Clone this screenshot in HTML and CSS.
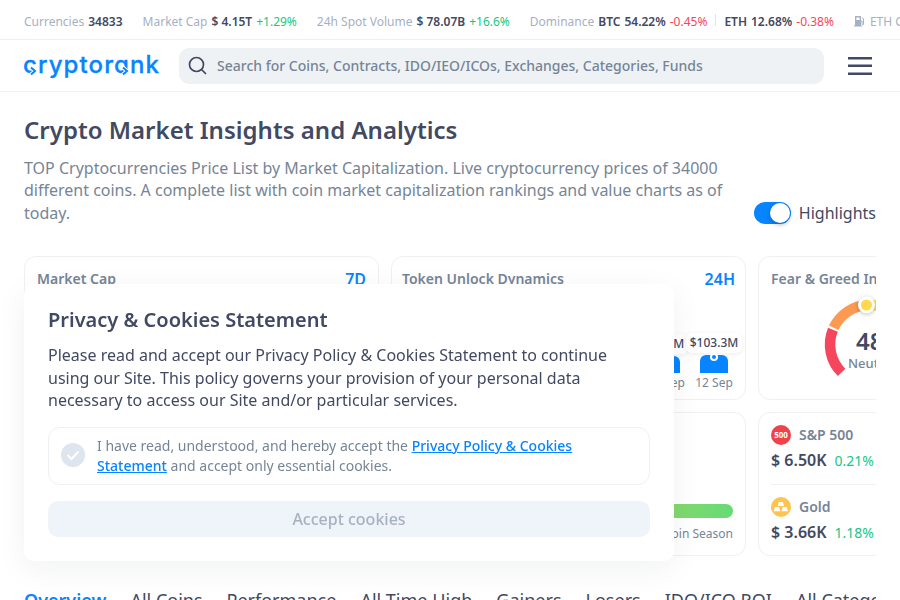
FILE: index.html
```html
<!DOCTYPE html>
<html lang="en">
<head>
<meta charset="utf-8">
<title>Crypto Market Insights and Analytics</title>
<link rel="stylesheet" href="styles.css">
</head>
<body>
<div class="ticker">
  <div class="stat">Currencies <b>34833</b></div>
  <div class="stat">Market Cap <b>$ 4.15T</b> <span class="up">+1.29%</span></div>
  <div class="stat">24h Spot Volume <b>$ 78.07B</b> <span class="up">+16.6%</span></div>
  <div class="stat">Dominance <b>BTC</b> <b>54.22%</b> <span class="down">-0.45%</span><i class="sep"></i><b>ETH</b> <b>12.68%</b> <span class="down">-0.38%</span></div>
  <div class="stat gas"><svg width="11" height="12" viewBox="0 0 11 12"><path d="M1 1.5Q1 1 1.5 1h5Q7 1 7 1.500V10.500H8V11.500H0V10.500H1zM2.400 2.500V5H5.600V2.500z" fill="#a6b0c3" fill-rule="evenodd"/><path d="M7 6h1v3.500q.8 1 1.500 0V4L8 2.500" fill="none" stroke="#a6b0c3"/></svg><span>ETH Gas</span></div>
</div>
<header class="header">
  <svg class="logo" width="136" height="32" viewBox="0 0 136 32">
    <text x="-1" y="23" textLength="136" lengthAdjust="spacing">cryptorank</text>
    <g fill="none">
      <path d="M7 17.500l4 3.500-4 3.500M99 17.500l4 3.500-4 3.500" stroke="#fff" stroke-width="4"/>
      <path d="M7 17.500l4 3.500-4 3.500M99 17.500l4 3.500-4 3.500" stroke="#0784ff" stroke-width="2"/>
    </g>
  </svg>
  <div class="search">
    <svg width="20" height="20" viewBox="0 0 20 20"><circle cx="8.500" cy="8.500" r="7" /><path d="M13.500 13.500L18 18"/></svg>
    <span>Search for Coins, Contracts, IDO/IEO/ICOs, Exchanges, Categories, Funds</span>
  </div>
  <svg class="burger" width="24" height="20" viewBox="0 0 24 20"><path d="M0 1h24v2.400H0zM0 8.600h24V11H0zM0 16.600h24V19H0z" fill="#424962"/></svg>
</header>
<main class="main">
  <h1>Crypto Market Insights and Analytics</h1>
  <div class="intro">
    <p>TOP Cryptocurrencies Price List by Market Capitalization. Live cryptocurrency prices of 34000 different coins. A complete list with coin market capitalization rankings and value charts as of today.</p>
    <label class="toggle"><span class="track"></span>Highlights</label>
  </div>
  <div class="cards">
    <section class="card"><div class="card-head"><h2>Market Cap</h2><em>7D</em></div></section>
    <section class="card unlocks">
      <div class="card-head"><h2>Token Unlock Dynamics</h2><em>24H</em></div>
      <div class="bars">
        <div class="bar-item"><span class="value">$93.5M</span><span class="bar"></span><small>11 Sep</small></div>
        <div class="bar-item"><span class="value">$103.3M</span><span class="bar tall"></span><small>12 Sep</small></div>
      </div>
    </section>
    <section class="card">
      <div class="card-head"><h2>Fear &amp; Greed Index</h2></div>
      <svg class="gauge" width="105" height="84" viewBox="0 0 105 84">
        <g fill="none" stroke-width="10.500">
          <path d="M18.600 74.400A39.500 39.500 0 0 1 9.900 31.700" stroke="#f6465d"/>
          <path d="M10.700 29.800A39.500 39.500 0 0 1 45 7" stroke="#fb9a50"/>
          <path d="M47.500 7A39.500 39.500 0 0 1 74 18" stroke="#ffd84d"/>
        </g>
        <circle class="knob" cx="43.500" cy="7" r="7" fill="#ffd84d" stroke="#fff" stroke-width="3"/>
        <text class="score" x="33" y="52">48</text><text class="mood" x="25" y="70">Neutral</text>
      </svg>
    </section>
    <section class="card"></section>
    <section class="card season"><div class="scale"></div><small>Altcoin Season</small></section>
    <section class="card markets">
      <div class="asset">
        <div class="asset-name"><span class="dot red">500</span>S&amp;P 500</div>
        <div class="price"><b>$ 6.50K</b><span class="up">0.21%</span></div>
      </div>
      <div class="asset">
        <div class="asset-name"><span class="dot gold"><svg width="16" height="12" viewBox="0 0 16 12" fill="#fff"><path d="M5.800 1h4l1.200 4H4.600zM2 6h4l1.300 4.200H.8zM9.700 6h4l1.300 4.200H8.500z"/></svg></span>Gold</div>
        <div class="price"><b>$ 3.66K</b><span class="up">1.18%</span></div>
      </div>
    </section>
  </div>
  <nav class="tabs"><a class="active">Overview</a><a>All Coins</a><a>Performance</a><a>All Time High</a><a>Gainers</a><a>Losers</a><a>IDO/ICO ROI</a><a>All Categories</a></nav>
</main>
<aside class="cookies">
  <h3>Privacy &amp; Cookies Statement</h3>
  <p>Please read and accept our Privacy Policy &amp; Cookies Statement to continue using our Site. This policy governs your provision of your personal data necessary to access our Site and/or particular services.</p>
  <div class="consent">
    <svg width="24" height="24" viewBox="0 0 24 24"><circle cx="12" cy="12" r="12" fill="#dfe5ee"/><path d="M6.500 12l4 4 7-7.500" fill="none" stroke="#fff" stroke-width="2"/></svg>
    <div>I have read, understood, and hereby accept the <a>Privacy Policy &amp; Cookies Statement</a> and accept only essential cookies.</div>
  </div>
  <button>Accept cookies</button>
</aside>
</body>
</html>
```
FILE: styles.css
```css
* { box-sizing: border-box; }
body { margin: 0; height: 600px; overflow: hidden; background: #fff; color: #424962; font-family: "Noto Sans", sans-serif; font-size: 16px; }
h1, h2, h3, p { margin: 0; }
.up { color: #16c784; }
.down { color: #f6465d; }
.ticker { display: flex; align-items: center; gap: 20px; height: 40px; padding: 3px 0 0 24px; border-bottom: 1px solid #eff0f2; font-size: 12px; color: #a6b0c3; white-space: nowrap; overflow: hidden; }
.stat { display: flex; align-items: center; gap: 4px; flex: none; }
.gas { gap: 5px; }
.stat b { color: #424962; font-weight: 600; }
.sep { width: 1px; height: 12px; margin: 0 4px; background: #dfe5ee; transform: translateY(-1px); }
.header { display: flex; align-items: center; height: 52px; padding: 0 28px 0 24px; border-bottom: 1px solid #eff0f2; }
.logo { flex: none; overflow: visible; margin-right: 19px; }
.logo text { font: 500 24px Inter, sans-serif; font-feature-settings: "cv11"; fill: #0784ff; stroke: #0784ff; stroke-width: .3; }
.search { display: flex; align-items: center; gap: 9px; width: 645px; height: 36px; padding: 0 9px; border-radius: 10px; background: #eef2f5; color: #768596; font-size: 14px; font-weight: 500; }
.search svg { fill: none; stroke: #424962; stroke-width: 1.7; }
.burger { flex: none; margin-left: 24px; }
.main { padding: 23px 24px 0; }
h1 { font-size: 24px; line-height: 29px; font-weight: 600; letter-spacing: .01px; }
.intro { display: flex; align-items: flex-end; justify-content: space-between; margin-top: 13px; }
.intro p { width: 706px; color: #768596; line-height: 22.4px; }
.toggle { display: flex; align-items: center; gap: 8px; flex: none; line-height: 22px; }
.track { display: flex; align-items: center; justify-content: flex-end; width: 37px; height: 22px; border-radius: 11px; padding: 1px; background: #0784ff; }
.track::after { content: ""; width: 20px; height: 20px; border-radius: 50%; background: #fff; box-shadow: 0 2px 4px rgba(0, 35, 70, .3); }
.cards { display: grid; grid-template-columns: repeat(3, 355px); grid-template-rows: 144px 144px; gap: 12px; margin-top: 32px; overflow: hidden; }
.card { border: 1px solid #eff0f2; border-radius: 12px; padding: 11px 10px 11px 12px; min-width: 0; }
.card-head { display: flex; justify-content: space-between; align-items: center; height: 22px; }
.card-head h2 { font-size: 14px; line-height: 20px; font-weight: 600; color: #768596; }
.card-head em { color: #0784ff; font-style: normal; font-weight: 600; }
.card:first-child .card-head { padding-right: 2px; }
.unlocks { padding-left: 10px; }
.bars { display: flex; justify-content: flex-end; align-items: flex-end; margin: 41px -10px 0 0; height: 60px; }
.bar-item { display: flex; flex-direction: column; align-items: center; width: 48px; font-size: 12px; line-height: 16px; white-space: nowrap; }
.bar-item:first-child .value { margin-right: 5px; }
.bar-item:last-child { margin-right: 7px; }
.bar { width: 28px; height: 17px; margin-bottom: 2px; border-radius: 6px 6px 0 0; background: #0784ff; }
.bar.tall { height: 18px; }
.value { margin-bottom: 2px; padding: 2px 4px; border-radius: 6px; background: #fff; box-shadow: 0 1px 4px rgba(0, 30, 60, .08); font-weight: 500; }
.bar-item small { font-size: 12px; color: #768596; }
.tall { position: relative; }
.tall::before { content: ""; position: absolute; left: 10px; top: -2px; width: 4px; height: 4px; border: 2px solid #fff; box-sizing: content-box; border-radius: 50%; background: #0784ff; }
.gauge { display: block; margin: 8px 0 0 52px; overflow: visible; }
.knob { filter: drop-shadow(0 1px 2px rgba(0, 0, 0, .25)); }
.score { font-size: 24px; font-weight: 600; fill: #424962; }
.mood { font-size: 13px; font-weight: 500; fill: #768596; }
.season { display: flex; flex-direction: column; justify-content: flex-end; padding-right: 12px; text-align: right; color: #768596; }
.scale { height: 14px; border-radius: 7px; background: linear-gradient(90deg, #f6465d, #ffd84d 35%, #85d96c 80%, #66db76); }
.season small { font-size: 12px; line-height: 16px; margin-top: 8px; margin-bottom: 2px; }
.markets { padding: 11px 12px; }
.asset + .asset { border-top: 1px solid #eff0f2; margin-top: 13px; padding-top: 11px; }
.asset-name { display: flex; align-items: center; gap: 8px; height: 21px; font-size: 14px; font-weight: 600; color: #768596; }
.dot { display: flex; align-items: center; justify-content: center; width: 20px; height: 20px; border-radius: 50%; color: #fff; font-size: 8px; font-weight: 700; }
.red { background: #ef424b; }
.gold { background: #ffc34f; }
.price { display: flex; align-items: center; gap: 8px; height: 22px; margin-top: 4px; }
.price b { font-weight: 600; }
.price span { font-size: 14px; }
.tabs { display: flex; gap: 24px; margin-top: 32px; font-size: 18px; line-height: 24px; white-space: nowrap; overflow: hidden; }
.tabs .active { color: #0784ff; font-weight: 600; }
.cookies { position: fixed; left: 24px; top: 284px; width: 650px; height: 277px; padding: 24px; border-radius: 10px; background: #fff; box-shadow: 0 8px 32px rgba(0, 26, 26, .06); }
.cookies h3 { font-size: 20px; line-height: 24px; font-weight: 600; }
.cookies p { margin-top: 12.2px; line-height: 22.4px; }
.consent { display: flex; align-items: center; gap: 12px; margin-top: 15.6px; height: 58px; padding: 0 12px; border: 1px solid #eff0f2; border-radius: 12px; color: #768596; font-size: 14px; line-height: 20px; }
.consent svg { flex: none; margin-bottom: 2px; }
.consent a { color: #0784ff; font-weight: 500; text-decoration: underline; }
.cookies button { display: block; width: 100%; height: 36px; margin-top: 16px; border: 0; border-radius: 10px; background: #eff3fa; color: #a8b1be; font: 500 16px "Noto Sans", sans-serif; }
```
